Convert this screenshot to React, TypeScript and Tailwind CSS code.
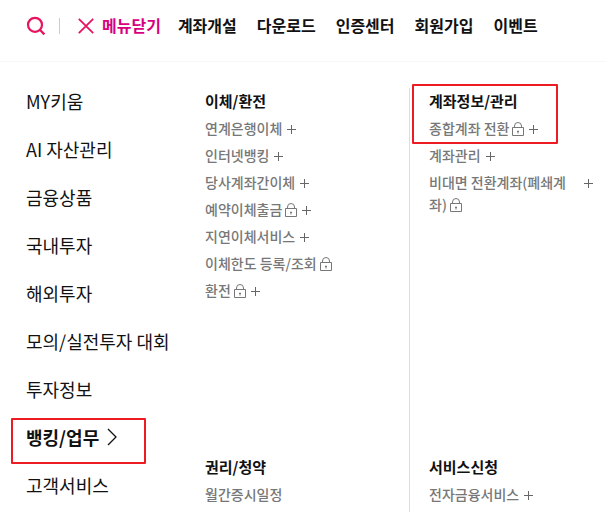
import React from 'react';

interface MenuItem {
  label: string;
  locked?: boolean;
  expandable?: boolean;
}

interface MenuGroup {
  title: string;
  items: MenuItem[];
  highlightFirst?: boolean;
}

const topLinks = ['계좌개설', '다운로드', '인증센터', '회원가입', '이벤트'];

const categories = [
  'MY키움',
  'AI 자산관리',
  '금융상품',
  '국내투자',
  '해외투자',
  '모의/실전투자 대회',
  '투자정보',
  '뱅킹/업무',
  '고객서비스',
];

const activeCategory = '뱅킹/업무';

const leftGroups: MenuGroup[] = [
  {
    title: '이체/환전',
    items: [
      { label: '연계은행이체', expandable: true },
      { label: '인터넷뱅킹', expandable: true },
      { label: '당사계좌간이체', expandable: true },
      { label: '예약이체출금', locked: true, expandable: true },
      { label: '지연이체서비스', expandable: true },
      { label: '이체한도 등록/조회', locked: true },
      { label: '환전', locked: true, expandable: true },
    ],
  },
  { title: '권리/청약', items: [{ label: '월간증시일정' }] },
];

const rightGroups: MenuGroup[] = [
  {
    title: '계좌정보/관리',
    highlightFirst: true,
    items: [
      { label: '종합계좌 전환', locked: true, expandable: true },
      { label: '계좌관리', expandable: true },
      { label: '비대면 전환계좌(폐쇄계좌)', locked: true, expandable: true },
    ],
  },
  { title: '서비스신청', items: [{ label: '전자금융서비스', expandable: true }] },
];

const SearchIcon = () => (
  <svg width="20" height="20" viewBox="0 0 20 20" fill="none" stroke="#e6145f" strokeWidth="2.2">
    <circle cx="9" cy="8.8" r="7" />
    <path d="M13.8 13.8l4.6 4.6" />
  </svg>
);

const CloseIcon = () => (
  <svg width="16" height="16" viewBox="0 0 16 16" fill="none" stroke="#e6145f" strokeWidth="1.8">
    <path d="M0.8 0.8l14.4 14.4M15.2 0.8L0.8 15.2" />
  </svg>
);

const LockIcon = () => (
  <svg className="inline-block ml-[3px] align-[-2px]" width="12" height="14" viewBox="0 0 12 14" fill="none" stroke="#777777">
    <path d="M0.5 5.5h11v8h-11zM2.5 5.5V4a3.5 3.5 0 0 1 7 0v1.5" />
    <path d="M6 8.5v3M5 9.5h2" />
  </svg>
);

const PlusIcon = () => (
  <svg width="9" height="9" viewBox="0 0 9 9" fill="none" stroke="#666666">
    <path d="M4.5 0v9M0 4.5h9" />
  </svg>
);

const Highlight: React.FC<{ className: string }> = ({ className }) => (
  <span aria-hidden="true" className={`absolute border-2 border-[#ed1c24] rounded-[1px] pointer-events-none ${className}`} />
);

const Group: React.FC<{ group: MenuGroup }> = ({ group }) => (
  <section className="relative">
    {group.highlightFirst && <Highlight className="-left-[17px] -top-1 w-[146px] h-[60px]" />}
    <h2 className="text-[15px] leading-[26px] font-bold text-[#111111]">{group.title}</h2>
    <ul className="mt-[3px] space-y-[5px]">
      {group.items.map(item => (
        <li key={item.label} className="flex items-start">
          <a href="#" className="text-sm leading-[22px] font-medium text-[#777777]">
            {item.label}
            {item.locked && <LockIcon />}
          </a>
          {item.expandable && (
            <button type="button" aria-label={`${item.label} 펼치기`} className="flex items-center shrink-0 h-[22px] pt-[3px] pl-[5px]">
              <PlusIcon />
            </button>
          )}
        </li>
      ))}
    </ul>
  </section>
);

const App: React.FC = () => (
  <div className="min-h-screen flex flex-col bg-white overflow-hidden font-['Noto_Sans_CJK_KR',sans-serif]">
    <header className="flex items-center h-[62px] pl-[26px] pb-2.5 border-b border-[#f7f7f7] shrink-0">
      <button type="button" aria-label="검색"><SearchIcon /></button>
      <span className="w-px h-4 ml-[13px] bg-[#cccccc]" />
      <button type="button" className="flex items-center gap-2 ml-[18px] font-bold text-[#d7007f]">
        <CloseIcon />
        <span className="pb-0.5">메뉴닫기</span>
      </button>
      <nav className="flex gap-5 ml-[17px] pb-0.5">
        {topLinks.map(link => (
          <a key={link} href="#" className="font-bold text-[#111111] whitespace-nowrap">{link}</a>
        ))}
      </nav>
    </header>

    <div className="flex flex-1">
      <nav className="w-[205px] shrink-0 pt-[15px] pl-[26px]">
        <ul>
          {categories.map(name => {
            const active = name === activeCategory;
            return (
              <li key={name} className="relative">
                {active && <Highlight className="-left-[15px] top-[5px] w-[135px] h-[46px]" />}
                <a href="#" className={`flex items-center h-12 text-lg text-[#111111] whitespace-nowrap ${active ? 'font-bold' : ''}`}>
                  {name}
                  {active && (
                    <svg className="ml-2" width="10" height="18" viewBox="0 0 10 18" fill="none" stroke="#111111" strokeWidth="1.3">
                      <path d="M1 1l8 8-8 8" />
                    </svg>
                  )}
                </a>
              </li>
            );
          })}
        </ul>
      </nav>

      <main className="flex flex-1 pt-[26px]">
        <div className="grid grid-rows-[366px_auto] content-start w-[204px] shrink-0">
          {leftGroups.map(group => <Group key={group.title} group={group} />)}
        </div>
        <div className="grid grid-rows-[366px_auto] content-start flex-1 pl-[19px] pr-[13px] border-l border-[#dddddd]">
          {rightGroups.map(group => <Group key={group.title} group={group} />)}
        </div>
      </main>
    </div>
  </div>
);

export default App;
